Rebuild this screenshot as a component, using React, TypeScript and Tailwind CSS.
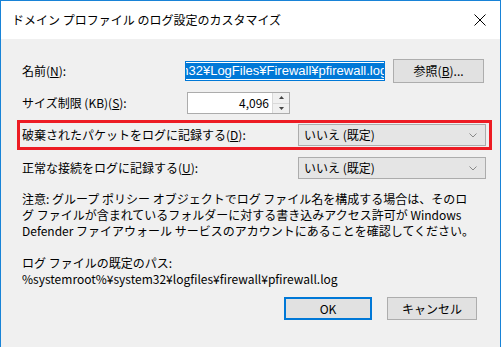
import React from 'react';

const font = "font-['Noto_Sans_CJK_JP','Noto_Sans',sans-serif]";

function Combo() {
  return (
    <div className="flex h-[22px] w-[188px] items-center justify-between border border-[#acacac] bg-[#e5e5e5] pl-[5px] pr-[8px]">
      <span>いいえ (既定)</span>
      <svg width="8" height="5" viewBox="0 0 8 5" className="text-[#888]">
        <path d="M0.5 0.5 L4 4 L7.5 0.5" fill="none" stroke="currentColor" strokeWidth="1" />
      </svg>
    </div>
  );
}

export default function App() {
  return (
    <div className={`${font} h-[347px] w-[501px] overflow-hidden border-x border-t border-[#1883d7] bg-[#f0f0f0] text-[12px] leading-[16px] text-black`}>
      <div className="flex h-[38px] items-center justify-between bg-white pl-[11px] pr-[14px]">
        <span>ドメイン プロファイル のログ設定のカスタマイズ</span>
        <svg width="12" height="12" viewBox="0 0 12 12">
          <path d="M0.5 0.5 L11.5 11.5 M11.5 0.5 L0.5 11.5" stroke="#000" strokeWidth="1" />
        </svg>
      </div>

      <div className="flex flex-col px-[16px]">
        <div className="mt-[20px] flex h-[24px] items-center pl-[5px]">
          <span className="w-[165px]">
            名前(<span className="underline">N</span>):
          </span>
          <div className="flex h-[20px] w-[203px] items-center justify-end overflow-hidden border border-[#0078d7] bg-white">
            <span className="mr-[-3px] shrink-0 whitespace-nowrap bg-[#0078d7] font-['Liberation_Sans',sans-serif] text-[13px] text-white">
              C:¥Windows¥system32¥LogFiles¥Firewall¥pfirewall.log
            </span>
          </div>
          <div className="ml-[8px] flex h-[24px] w-[92px] items-center justify-center border border-[#adadad] bg-[#e1e1e1]">
            参照(<span className="underline">B</span>)...
          </div>
        </div>

        <div className="mt-[9px] flex h-[22px] items-center pl-[5px]">
          <span className="w-[165px]">
            サイズ制限 (KB)(<span className="underline">S</span>):
          </span>
          <div className="flex h-[22px] w-[103px] border border-[#acacac] bg-white">
            <div className="flex flex-1 items-center justify-end pr-[3px]">4,096</div>
            <div className="flex w-[17px] flex-col border-l border-[#d9d9d9] bg-[#f0f0f0]">
              <div className="flex flex-1 items-center justify-center border-b border-[#d9d9d9]">
                <svg width="5" height="3" viewBox="0 0 5 3"><path d="M2.5 0 L5 3 L0 3 Z" fill="#444" /></svg>
              </div>
              <div className="flex flex-1 items-center justify-center">
                <svg width="5" height="3" viewBox="0 0 5 3"><path d="M0 0 L5 0 L2.5 3 Z" fill="#444" /></svg>
              </div>
            </div>
          </div>
        </div>

        <div className="mt-[6px] flex h-[30px] w-[475px] items-center justify-between border-[3px] border-[#ed1c24] pl-[2px] pr-[3px]">
          <span>
            破棄されたパケットをログに記録する(<span className="underline">D</span>):
          </span>
          <Combo />
        </div>

        <div className="mt-[7px] flex h-[22px] w-[475px] items-center justify-between pl-[5px] pr-[6px]">
          <span>
            正常な接続をログに記録する(<span className="underline">U</span>):
          </span>
          <Combo />
        </div>

        <div className="mt-[12px] flex flex-col whitespace-nowrap pl-[5px]">
          <span>注意: グループ ポリシー オブジェクトでログ ファイル名を構成する場合は、そのロ</span>
          <span>グ ファイルが含まれているフォルダーに対する書き込みアクセス許可が Windows</span>
          <span>Defender ファイアウォール サービスのアカウントにあることを確認してください。</span>
        </div>

        <div className="mt-[16px] flex flex-col whitespace-nowrap pl-[5px]">
          <span>ログ ファイルの既定のパス:</span>
          <span>%systemroot%¥system32¥logfiles¥firewall¥pfirewall.log</span>
        </div>

        <div className="mt-[10px] flex justify-end gap-[15px] pr-[7px]">
          <div className="flex h-[23px] w-[88px] items-center justify-center border-2 border-[#0078d7] bg-[#e1e1e1]">OK</div>
          <div className="flex h-[23px] w-[90px] items-center justify-center border border-[#adadad] bg-[#e1e1e1]">キャンセル</div>
        </div>
      </div>
    </div>
  );
}
